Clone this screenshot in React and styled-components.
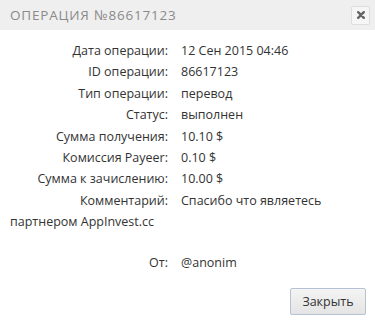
import React from "react";
import styled, { createGlobalStyle } from "styled-components";

const GlobalStyle = createGlobalStyle`
  body {
    margin: 0;
    background: #ffffff;
    font-family: "Open Sans", "Liberation Sans", sans-serif;
  }
`;

const Dialog = styled.div`
  width: 375px;
  height: 320px;
  background: #ffffff;
  display: flex;
  flex-direction: column;
  overflow: hidden;
`;

const TitleBar = styled.div`
  height: 30px;
  background: #efefef;
  display: flex;
  align-items: center;
  justify-content: space-between;
  padding: 0 5px 0 10px;
`;

const Title = styled.h1`
  margin: 0;
  font-size: 13.5px;
  font-weight: 400;
  letter-spacing: 0.8px;
  color: #8a8a8a;
  text-transform: uppercase;
`;

const CloseButton = styled.button`
  width: 19px;
  height: 19px;
  padding: 0;
  border: 1px solid #dedede;
  border-radius: 2px;
  background: #f6f6f6;
  display: flex;
  align-items: center;
  justify-content: center;
`;

const Body = styled.div`
  padding: 10px 10px 0 10px;
  font-size: 12.5px;
  color: #333333;
`;

const Row = styled.div`
  line-height: 21.4px;
  margin-top: ${(p) => (p.$gap ? "19.5px" : "0")};
`;

const Label = styled.span`
  display: inline-block;
  width: 158px;
  text-align: right;
  padding-right: 13px;
`;

const Footer = styled.div`
  margin-top: auto;
  display: flex;
  justify-content: flex-end;
  padding: 0 9px 5px 0;
`;

const Button = styled.button`
  width: 76px;
  height: 27px;
  border: 1px solid #b4c2d4;
  border-radius: 2px;
  background: linear-gradient(#f4f4f4, #e4e4e4);
  font-family: "Open Sans", "Liberation Sans", sans-serif;
  font-size: 12.5px;
  color: #333333;
`;

const rows = [
  ["Дата операции:", "12 Сен 2015 04:46"],
  ["ID операции:", "86617123"],
  ["Тип операции:", "перевод"],
  ["Статус:", "выполнен"],
  ["Сумма получения:", "10.10 $"],
  ["Комиссия Payeer:", "0.10 $"],
  ["Сумма к зачислению:", "10.00 $"],
  ["Комментарий:", "Спасибо что являетесь"],
];

const App = () => (
  <Dialog>
    <GlobalStyle />
    <TitleBar>
      <Title>Операция №86617123</Title>
      <CloseButton aria-label="close">
        <svg width="8" height="8" viewBox="0 0 8 8">
          <path
            d="M1.2 1.2 L6.8 6.8 M6.8 1.2 L1.2 6.8"
            stroke="#666666"
            strokeWidth="2.4"
            strokeLinecap="round"
          />
        </svg>
      </CloseButton>
    </TitleBar>
    <Body>
      {rows.map(([label, value]) => (
        <Row key={label}>
          <Label>{label}</Label>
          <span>{value}</span>
        </Row>
      ))}
      <Row>партнером AppInvest.cc</Row>
      <Row $gap>
        <Label>От:</Label>
        <span>@anonim</span>
      </Row>
    </Body>
    <Footer>
      <Button>Закрыть</Button>
    </Footer>
  </Dialog>
);

export default App;
